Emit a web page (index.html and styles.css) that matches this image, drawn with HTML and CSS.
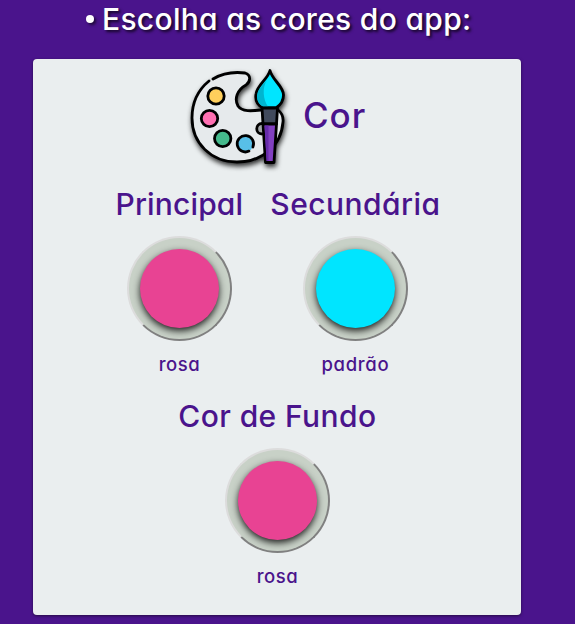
FILE: index.html
```html
<!DOCTYPE html>
<html lang="pt-BR">
<head>
<meta charset="utf-8">
<title>Cores do app</title>
<link rel="stylesheet" href="styles.css">
</head>
<body>
<h1 class="title"><span class="bullet"></span><span class="title-text">Escolha as cores do app:</span></h1>
<main class="card">
  <header class="card-header">
    <svg class="palette" viewBox="0 0 120 115" width="120" height="115">
      <g stroke="#000" stroke-width="2.8" stroke-linecap="round" stroke-linejoin="round">
        <path fill="#e6eaec" stroke="none" d="M32 19C43 12 54 11 66 13C71 15 71 21 66 25C57 30 54 39 58 46C62 52 70 50 78 50C92 47 103 49 103 63C101 87 82 102 56 102C31 102 12 83 12 58C12 42 19 29 32 19Z"/>
        <path fill="none" d="M33 19C43 13 53 11.500 65 13C71 15 71 21 66 25C57 30 54 39 58 46C62 52 72 51 81 50M98 50C102 53 103.500 57 103 62C101 87 81 102 57 102C31 102 12 83 12 58C12 42 18 30 29 21"/>
        <path fill="#a4a8aa" d="M82 63.500C75 63.500 75 74 82 74"/>
        <circle cx="36" cy="36" r="8.2" fill="#ffcf5c"/>
        <circle cx="29.500" cy="58.500" r="8.2" fill="#ff70b2"/>
        <circle cx="42.700" cy="78.500" r="8.2" fill="#45ba8c"/>
        <circle cx="65.300" cy="83.800" r="8.2" fill="#58bfe8" stroke="none"/>
        <path fill="none" d="M69 91.100A8.2 8.2 0 1 1 72.900 87"/>
        <path fill="#00e5ff" d="M90 10.5C92 20 103.500 26 103.500 35C103.500 42 99 46 96 48H83C77 45 75 40 76 34C77 25 88 19 90 10.5Z"/>
        <path fill="#00b5cf" stroke="none" d="M87 20C82 27 83 40 88 46.500H83C78 44 76.500 39 77.500 34C78.500 28 84 24 87 20Z"/>
        <path fill="#414a5c" d="M82 48H97.500L96.500 64H83Z"/>
        <path fill="#8240c0" d="M83 64H96.500L94 102.500H85.500Z"/>
        <path fill="#662baa" stroke="none" d="M84.500 65.500H88.500L88.500 101H86.500Z"/>
      </g>
    </svg>
    <h2 class="heading-main">Cor</h2>
  </header>
  <div class="options">
    <section class="option">
      <h3 class="heading principal">Principal</h3>
      <div class="ring"><div class="swatch pink"></div></div>
      <p class="name rosa">rosa</p>
    </section>
    <section class="option">
      <h3 class="heading secundaria">Secundária</h3>
      <div class="ring"><div class="swatch cyan"></div></div>
      <p class="name padrao">padrão</p>
    </section>
  </div>
  <section class="option background-option">
    <h3 class="heading fundo">Cor de Fundo</h3>
    <div class="ring"><div class="swatch pink"></div></div>
    <p class="name rosa">rosa</p>
  </section>
</main>
</body>
</html>
```
FILE: styles.css
```css
* { box-sizing: border-box; }

body {
  margin: 0;
  height: 624px;
  overflow: hidden;
  background: #4a148c;
  color: #4a148c;
  font-family: Inter, "Liberation Sans", sans-serif;
  font-feature-settings: "cv11" 1;
}

h1, h2, h3, p { margin: 0; font-weight: 500; white-space: nowrap; }

.title {
  display: flex;
  align-items: center;
  height: 59px;
  padding: 0 0 22px 86px;
  color: #fff;
  font-size: 30px;
  font-weight: 450;
  line-height: 38px;
  letter-spacing: 0.3px;
  text-shadow: 2px 2px 3px rgba(0, 0, 0, 0.75);
}

.bullet {
  width: 8px;
  height: 8px;
  margin-right: 8px;
  border-radius: 50%;
  background: #fff;
  box-shadow: 2px 2px 3px rgba(0, 0, 0, 0.6);
}

.card {
  width: 488px;
  height: 556px;
  margin-left: 33.4px;
  border-radius: 4px;
  background: #eaeeef;
  box-shadow: 0 1px 3px rgba(0, 0, 0, 0.5);
}

.card-header {
  display: flex;
  height: 121px;
  padding: 1px 0 0 146.5px;
}

.palette { filter: drop-shadow(1px 3px 2.5px rgba(0, 0, 0, 0.8)); }

.heading-main {
  margin-left: 3px;
  font-size: 35px;
  line-height: 110px;
  letter-spacing: 1px;
}

.options {
  display: flex;
  padding-left: 58px;
}

.option {
  display: flex;
  flex-direction: column;
  align-items: center;
  width: 176px;
}

.heading {
  height: 56px;
  font-size: 30px;
  line-height: 49px;
}

.principal { letter-spacing: 0.15px; }
.secundaria { letter-spacing: 0.45px; }
.fundo { letter-spacing: 0.4px; }

.ring {
  display: grid;
  place-items: center;
  width: 105px;
  height: 105px;
  border: 2px solid;
  border-color: #dcdcdc #808080 #808080 #dcdcdc;
  border-radius: 50%;
  background: #c8d1c7;
}

.swatch {
  width: 79px;
  height: 79px;
  border-radius: 50%;
  box-shadow: 0 3px 7px rgba(0, 0, 0, 0.85);
}

.pink { background: #e84393; }
.cyan { background: #00e5ff; }

.name {
  height: 52px;
  font-size: 18.5px;
  line-height: 46px;
}

.rosa { letter-spacing: 0.5px; }
.padrao { letter-spacing: 0.7px; }

.background-option { margin: -1px 0 0 156px; }
```
